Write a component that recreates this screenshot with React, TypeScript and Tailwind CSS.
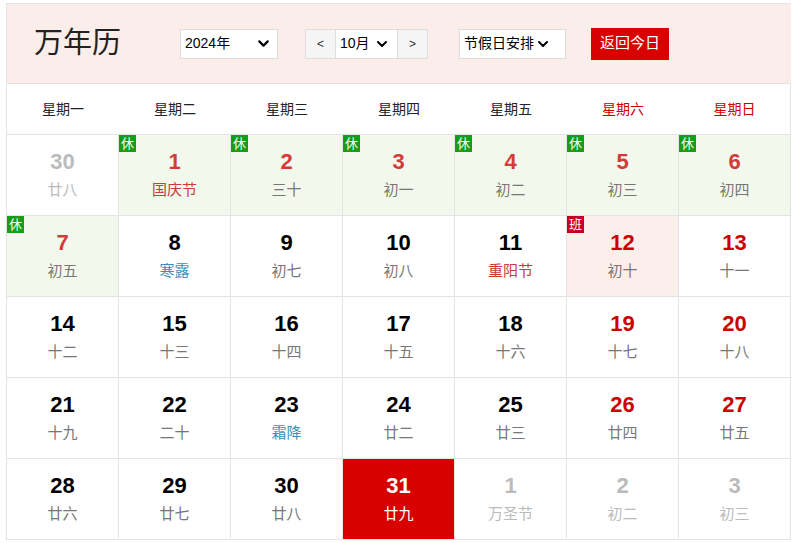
import { ChevronDown } from "lucide-react";

type Cell = { d: number; l: string; dim?: boolean; rest?: boolean; work?: boolean; fest?: boolean; term?: boolean; today?: boolean };

const rows: Cell[][] = [
  [
    { d: 30, l: "廿八", dim: true },
    { d: 1, l: "国庆节", rest: true, fest: true },
    { d: 2, l: "三十", rest: true },
    { d: 3, l: "初一", rest: true },
    { d: 4, l: "初二", rest: true },
    { d: 5, l: "初三", rest: true },
    { d: 6, l: "初四", rest: true },
  ],
  [
    { d: 7, l: "初五", rest: true },
    { d: 8, l: "寒露", term: true },
    { d: 9, l: "初七" },
    { d: 10, l: "初八" },
    { d: 11, l: "重阳节", fest: true },
    { d: 12, l: "初十", work: true },
    { d: 13, l: "十一" },
  ],
  [
    { d: 14, l: "十二" }, { d: 15, l: "十三" }, { d: 16, l: "十四" }, { d: 17, l: "十五" },
    { d: 18, l: "十六" }, { d: 19, l: "十七" }, { d: 20, l: "十八" },
  ],
  [
    { d: 21, l: "十九" }, { d: 22, l: "二十" }, { d: 23, l: "霜降", term: true }, { d: 24, l: "廿二" },
    { d: 25, l: "廿三" }, { d: 26, l: "廿四" }, { d: 27, l: "廿五" },
  ],
  [
    { d: 28, l: "廿六" }, { d: 29, l: "廿七" }, { d: 30, l: "廿八" }, { d: 31, l: "廿九", today: true },
    { d: 1, l: "万圣节", dim: true }, { d: 2, l: "初二", dim: true }, { d: 3, l: "初三", dim: true },
  ],
];

const weekdays = ["星期一", "星期二", "星期三", "星期四", "星期五", "星期六", "星期日"];

const DayCell = ({ c, col }: { c: Cell; col: number }) => {
  const weekend = col >= 5;
  let bg = "bg-white";
  if (c.rest) bg = "bg-[#f2f9ec]";
  if (c.work) bg = "bg-[#fbeeeb]";
  if (c.today) bg = "bg-[#d90000]";
  let num = "text-black";
  if (c.dim) num = "text-[#bbbbbb]";
  else if (c.today) num = "text-white";
  else if (c.rest) num = "text-[#d33a3a]";
  else if (weekend) num = "text-[#cc0000]";
  let lunar = "text-[#777]";
  if (c.dim) lunar = "text-[#bbbbbb]";
  else if (c.today) lunar = "text-white";
  else if (c.fest) lunar = "text-[#c83c3c]";
  else if (c.term) lunar = "text-[#3a8fb7]";
  return (
    <div className={`relative h-[81px] border-r border-b border-[#e4e4e4] flex flex-col items-center pt-[13px] ${bg}`}>
      {c.rest && (
        <span className="absolute left-0 top-0 w-[17px] h-[17px] bg-[#169c16] text-white text-[13px] leading-[17px] text-center">休</span>
      )}
      {c.work && (
        <span className="absolute left-0 top-0 w-[17px] h-[17px] bg-[#c5001c] text-white text-[13px] leading-[17px] text-center">班</span>
      )}
      <span className={`text-[22px] font-bold leading-[28px] ${num}`}>{c.d}</span>
      <span className={`text-[15px] leading-[22px] mt-[3px] ${lunar}`}>{c.l}</span>
    </div>
  );
};

export default function App() {
  return (
    <div className="w-[795px] h-[543px] bg-white overflow-hidden pl-[6px] pt-[3px] font-[Liberation_Sans,Noto_Sans_CJK_SC,sans-serif]">
      <div className="w-[785px] border-l border-t border-[#e4e4e4]">
        <div className="h-[80px] bg-[#fbeeea] border-b border-[#e4e4e4] flex items-center">
          <h1 className="ml-[27px] text-[29px] text-[#222] w-[146px] leading-none">万年历</h1>
          <div className="w-[98px] h-[30px] bg-white border border-[#ddd] flex items-center justify-between pl-[4px] pr-[5px] text-[14px] text-black">
            2024年 <ChevronDown size={17} strokeWidth={3} />
          </div>
          <div className="ml-[27px] flex h-[30px] border border-[#ddd] text-[14px]">
            <div className="w-[29px] bg-[#f5f5f5] flex items-center justify-center text-[#333] text-[12px]">&lt;</div>
            <div className="w-[63px] bg-white border-x border-[#ddd] flex items-center pl-[4px] gap-[4px] text-black">
              10月 <ChevronDown size={16} strokeWidth={3} />
            </div>
            <div className="w-[29px] bg-[#f5f5f5] flex items-center justify-center text-[#333] text-[12px]">&gt;</div>
          </div>
          <div className="ml-[31px] w-[107px] h-[30px] bg-white border border-[#ddd] flex items-center pl-[4px] gap-[1px] text-[14px] text-black whitespace-nowrap">
            节假日安排 <ChevronDown size={16} strokeWidth={3} className="shrink-0" />
          </div>
          <button className="ml-[25px] w-[78px] h-[32px] bg-[#d90000] text-white text-[15px]">返回今日</button>
        </div>
        <div className="grid grid-cols-7 h-[51px] border-b border-[#e4e4e4]">
          {weekdays.map((w, i) => (
            <div key={w} className={`flex items-center justify-center text-[14px] ${i >= 5 ? "text-[#cc0000]" : "text-[#222]"} ${i === 6 ? "border-r border-[#e4e4e4]" : ""}`}>
              {w}
            </div>
          ))}
        </div>
        {rows.map((r, ri) => (
          <div key={ri} className="grid grid-cols-7">
            {r.map((c, ci) => (
              <DayCell key={ci} c={c} col={ci} />
            ))}
          </div>
        ))}
      </div>
    </div>
  );
}
